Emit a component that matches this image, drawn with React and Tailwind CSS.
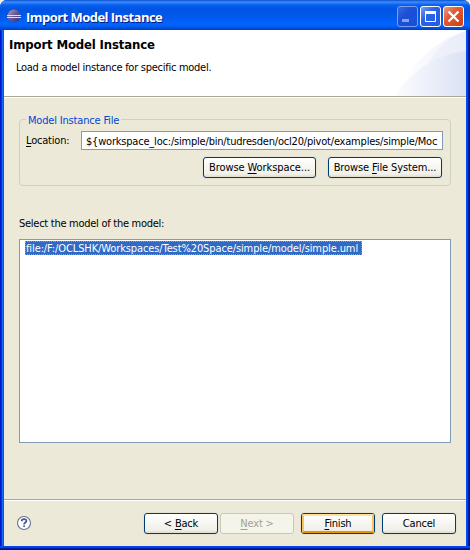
const Btn = ({ children, className = "" }) => (
  <button className={`h-[21px] shrink-0 rounded-[3px] border border-[#003c74] bg-[linear-gradient(#ffffff,#f6f5f1_50%,#f0efe9_85%,#dedacd)] text-center leading-[20px] whitespace-nowrap shadow-[0_0_0_1px_#e6e2d2] ${className}`}>
    {children}
  </button>
);

const Key = ({ children }) => <span className="underline decoration-1 underline-offset-[2px] [text-decoration-skip-ink:none]">{children}</span>;

const EclipseLogo = () => (
  <svg width="16" height="16" viewBox="0 0 16 16" className="block">
    <defs>
      <linearGradient id="ball" x1="0" y1="0" x2="1" y2="1">
        <stop offset="0" stopColor="#c09aac" />
        <stop offset="0.45" stopColor="#665c98" />
        <stop offset="1" stopColor="#2c2a7c" />
      </linearGradient>
    </defs>
    <circle cx="7" cy="8" r="6.4" fill="url(#ball)" />
    <path d="M0 7.5h14M0 9.5h14" stroke="#dcdcf2" strokeWidth="1" />
  </svg>
);

const CaptionButtons = () => (
  <svg width="67" height="21" viewBox="0 0 67 21" className="block">
    <defs>
      <linearGradient id="blue" x1="0" y1="0" x2="1" y2="1">
        <stop offset="0" stopColor="#7ba2f5" />
        <stop offset="0.4" stopColor="#2c62e4" />
        <stop offset="1" stopColor="#1f5be8" />
      </linearGradient>
      <linearGradient id="dim" x1="0" y1="0" x2="1" y2="1">
        <stop offset="0" stopColor="#3c6be0" />
        <stop offset="0.4" stopColor="#1c4fd6" />
        <stop offset="1" stopColor="#1450dc" />
      </linearGradient>
      <linearGradient id="red" x1="0" y1="0" x2="1" y2="1">
        <stop offset="0" stopColor="#f0a088" />
        <stop offset="0.4" stopColor="#e35a35" />
        <stop offset="1" stopColor="#cc3c10" />
      </linearGradient>
    </defs>
    <rect x="0.5" y="0.5" width="20" height="20" rx="2.5" fill="url(#dim)" stroke="#7c9cec" />
    <rect x="5" y="13" width="7" height="3" fill="#8ea0ec" />
    <rect x="23.5" y="0.5" width="20" height="20" rx="2.5" fill="url(#blue)" stroke="#fff" />
    <path d="M28.5 5v10.5h10V5" fill="none" stroke="#fff" />
    <rect x="28" y="5" width="11" height="3" fill="#fff" />
    <rect x="46.5" y="0.5" width="20" height="20" rx="2.5" fill="url(#red)" stroke="#fff" />
    <path d="M51.5 5.5l10 10M61.5 5.5l-10 10" stroke="#fff" strokeWidth="2.2" />
  </svg>
);

const HeaderArt = () => (
  <svg width="76" height="66" viewBox="0 0 76 66" className="block">
    <defs>
      <linearGradient id="fade" x1="0" y1="0" x2="1" y2="0">
        <stop offset="0.1" stopColor="#fff" />
        <stop offset="1" stopColor="#eceffa" />
      </linearGradient>
      <linearGradient id="fade2" x1="0" y1="0" x2="1" y2="0">
        <stop offset="0" stopColor="#fdfdff" />
        <stop offset="1" stopColor="#dae2f5" />
      </linearGradient>
    </defs>
    <path d="M4 66Q32 14 76 1V66Z" fill="url(#fade)" />
    <path d="M38 34Q54 8 76 1V22Q56 24 38 34Z" fill="#e6ebf8" opacity="0.45" />
    <path d="M4 66Q32 26 76 21V66Z" fill="url(#fade2)" />
  </svg>
);

const HelpIcon = () => (
  <svg width="16" height="16" viewBox="0 0 16 16" className="block">
    <circle cx="8" cy="8" r="6.5" fill="#fff" stroke="#5f7396" strokeWidth="1.1" />
    <path d="M5.7 6.3C5.7 3.4 10.4 3.4 10.4 6C10.4 7.6 8.1 7.5 8.1 9.4M8.1 10.6V12" fill="none" stroke="#45588a" strokeWidth="1.8" />
  </svg>
);

export default function App() {
  return (
    <div className="h-[550px] w-[470px] bg-[#f0efea] font-['DejaVu_Sans_Condensed','DejaVu_Sans',sans-serif] text-[11px] text-black">
      <div className="flex h-[550px] flex-col overflow-hidden rounded-t-[7px] bg-[#0042e0]">
        <div className="flex h-[30px] shrink-0 bg-[linear-gradient(#0a50cc_0,#3c8cfc_2px,#0660f0_5px,#0054e3_9px,#0058ea_16px,#0066ff_25px,#0050e0_28px,#003cc0_30px)] pt-[6px] pr-[6px] pl-[7px]">
          <div className="pt-[2px]"><EclipseLogo /></div>
          <div className="ml-[3px] flex-1 font-['Open_Sans',sans-serif] text-[13px] leading-[22px] font-bold tracking-[-0.54px] text-white [text-shadow:1px_1px_#0a1883]">Import Model Instance</div>
          <CaptionButtons />
        </div>
        <div className="flex min-h-0 flex-1 bg-[linear-gradient(90deg,#0019cf_0,#0019cf_1px,#0831d9_1px,#0831d9_2px,#166aee_2px,#166aee_3px,#0855dd_3px,#0855dd_466px,#0048f1_466px,#0048f1_468px,#001da0_468px,#00138c_470px)] px-[4px]">
          <div className="flex w-[462px] flex-col bg-[#ece9d8]">
            <div className="flex h-[66px] shrink-0 justify-between bg-white">
              <div className="pt-[7px] pl-[5px] leading-[16px]">
                <div className="text-[13px] font-bold tracking-[-0.14px]">Import Model Instance</div>
                <div className="mt-[7px] pl-[7px] tracking-[-0.27px]">Load a model instance for specific model.</div>
              </div>
              <HeaderArt />
            </div>
            <div className="h-[2px] shrink-0 border-t border-[#aca899] bg-white" />
            <div className="flex min-h-0 flex-1 flex-col px-[15px] pt-[15px]">
              <fieldset className="h-[73px] shrink-0 rounded-[4px] border border-[#d0d0bf]">
                <legend className="ml-[6px] h-[12px] px-[2px] leading-[15px] tracking-[-0.18px] text-[#0046d5]">Model Instance File</legend>
                <div className="mt-[6px] flex">
                  <div className="w-[61px] shrink-0 pl-[6px] leading-[20px] tracking-[-0.2px]"><Key>L</Key>ocation:</div>
                  <div className="h-[19px] w-[362px] shrink-0 border border-[#7f9db9] bg-white pl-[4px] leading-[19px] tracking-[-0.2px] whitespace-nowrap">{"${workspace_loc:/simple/bin/tudresden/ocl20/pivot/examples/simple/Moc"}</div>
                </div>
                <div className="mt-[6px] flex justify-end gap-[12px] pr-[8px]">
                  <Btn className="w-[113px] tracking-[-0.08px]">Browse <Key>W</Key>orkspace...</Btn>
                  <Btn className="w-[114px] tracking-[-0.12px]">Browse <Key>F</Key>ile System...</Btn>
                </div>
              </fieldset>
              <div className="mt-[29px] h-[24px] shrink-0 leading-[18px] tracking-[-0.27px]">Select the model of the model:</div>
              <div className="h-[204px] shrink-0 border border-[#7f9db9] bg-white pt-px pl-[5px]">
                <div className="h-[14px] w-[337px] border border-dotted border-[#ce953a] bg-[#316ac5] leading-[13px] tracking-[-0.11px] whitespace-nowrap text-white">file:/F:/OCLSHK/Workspaces/Test%20Space/simple/model/simple.uml</div>
              </div>
            </div>
            <div className="flex h-[47px] shrink-0 border-t border-[#aca899] shadow-[inset_0_1px_#fff]">
              <div className="flex-1 pt-[15px] pl-[12px]"><HelpIcon /></div>
              <div className="flex pt-[13px] pr-[10px] tracking-[-0.2px]">
                <Btn className="w-[74px]">&lt; <Key>B</Key>ack</Btn>
                <button className="ml-[2px] h-[21px] w-[74px] rounded-[3px] border border-[#c9c7ba] bg-[#f5f4ea] leading-[20px] text-[#a1a192]"><Key>N</Key>ext &gt;</button>
                <Btn className="ml-[7px] w-[74px]"><span className="block h-[19px] rounded-[2px] border-x-2 border-t-2 border-b-2 border-x-[#fac25a] border-t-[#ffe09a] border-b-[#e59700] leading-[16px]"><Key>F</Key>inish</span></Btn>
                <Btn className="ml-[7px] w-[74px]">Cancel</Btn>
              </div>
            </div>
          </div>
        </div>
        <div className="h-[4px] shrink-0 bg-[linear-gradient(#0048f1_0,#0044e8_2px,#001da0_2px,#00138c_4px)]" />
      </div>
    </div>
  );
}
